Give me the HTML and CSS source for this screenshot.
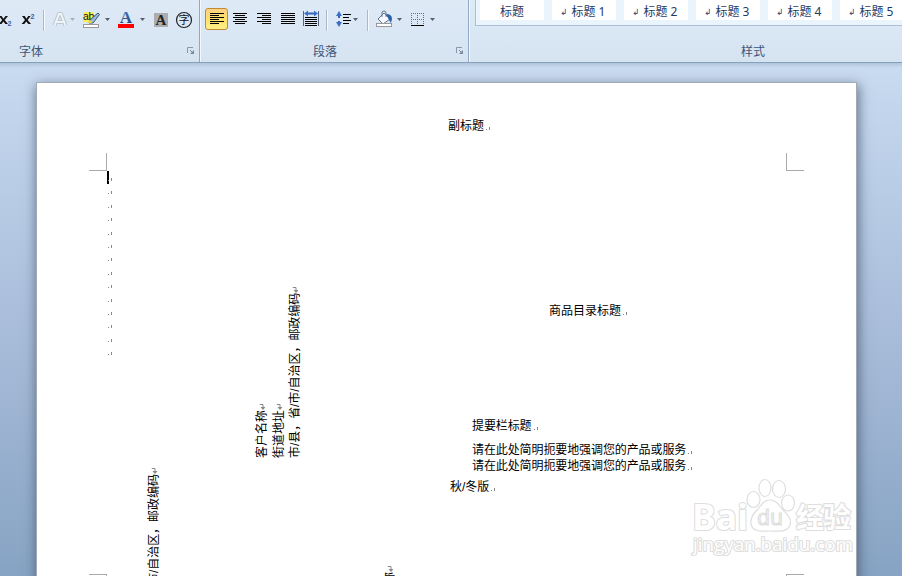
FILE: index.html
```
<!DOCTYPE html>
<html lang="zh-CN">
<head>
<meta charset="utf-8">
<title>文档</title>
<link rel="stylesheet" href="styles.css">
</head>
<body>
<svg width="0" height="0" class="defs">
  <defs>
    <linearGradient id="blue" x1="0" y1="0" x2="0" y2="1"><stop offset="0" stop-color="#4f86d0"/><stop offset="1" stop-color="#17356f"/></linearGradient>
    <symbol id="launch" viewBox="0 0 8 8"><path d="M0.5 6V0.5H6" fill="none" stroke="#8796aa"/><path d="M3 3l3 3" fill="none" stroke="#7c8899"/><path d="M3 7h4V3z" fill="#7c8899"/></symbol>
    <symbol id="ret" viewBox="0 0 6 6"><path d="M0 .5H3.500V4" fill="none" stroke="#888"/><path d="M1 3h5L3.500 6z" fill="#888"/></symbol>
  </defs>
</svg>
<div class="app">
  <header class="ribbon">
    <section class="group font-group">
      <div class="tools">
        <svg class="i-sub" width="12" height="22"><path d="M-1 6h2.500l2 2.700L5.500 6H8L4.700 10 8 14H5.300l-1.900-2.500L1.500 14H-1l3.200-4z" fill="#111"/><text x="7.500" y="15.500" class="script">2</text></svg>
        <svg class="i-sup" width="14" height="22"><path d="M0 6h2.700l1.700 2.700L6.300 6H8.700L5.600 10 9 14H6.300L4.200 11.500 2.300 14H-.4L3 10z" fill="#111"/><text x="8.500" y="8.500" class="script">2</text></svg>
        <i class="sep"></i>
        <svg class="i-glow" width="16" height="22"><path d="M2.500 15.500L7 4h2l4.500 11.500M4.500 12h7" class="halo"/><path d="M2.500 15.500L7 4h2l4.500 11.500M4.500 12h7" class="core"/></svg>
        <i class="drop pale"></i>
        <svg class="i-mark" width="18" height="22"><rect width="11" height="10" y="2" fill="#f5ee58"/><text x="0" y="9.500" class="ab">ab</text><path d="M15 3l1.500 1.500L10 13H6l2-4z" fill="#9cb9d8" stroke="#365579"/><path d="M4 13l3-3 3 2-2 1z" fill="#e5d64d"/><rect x=".5" y="14.500" width="15" height="3" fill="#fff" stroke="#999"/></svg>
        <i class="drop"></i>
        <svg class="i-color" width="16" height="22"><text x="8" y="13" class="serif-a">A</text><rect y="14" width="16" height="4" fill="#f00"/></svg>
        <i class="drop"></i>
        <svg class="i-shade" width="14" height="22"><rect y="3" width="14" height="14" fill="#adadad"/><text x="7" y="15" class="dark-a">A</text></svg>
        <svg class="i-ring" width="18" height="22"><circle cx="8" cy="10" r="7.500" fill="none" stroke="#222" stroke-width="1.200"/><text x="8" y="14" class="ring">字</text></svg>
      </div>
      <div class="caption">字体</div>
      <svg class="launcher" width="8" height="8"><use href="#launch"/></svg>
    </section>
    <section class="group para-group">
      <div class="tools">
        <span class="active"><svg width="14" height="12"><path d="M0 .5h14M0 2.500h9M0 4.500h14M0 6.500h9M0 8.500h14M0 10.500h9" stroke="#000"/></svg></span>
        <svg class="i-align" width="14" height="12"><path d="M0 .5h14M2 2.500h10M0 4.500h14M2 6.500h10M0 8.500h14M2 10.500h10" stroke="#000"/></svg>
        <svg class="i-align" width="14" height="12"><path d="M0 .5h14M5 2.500h9M0 4.500h14M5 6.500h9M0 8.500h14M5 10.500h9" stroke="#000"/></svg>
        <svg class="i-align" width="14" height="12"><path d="M0 .5h14M0 2.500h14M0 4.500h14M0 6.500h14M0 8.500h14M0 10.500h14" stroke="#000"/></svg>
        <svg class="i-dist" width="16" height="22"><path d="M.5 1v15M15.500 1v15" stroke="#53657c"/><path d="M3 3.500h10" stroke="#3165b8" stroke-width="2"/><path d="M1 3.500L5 .5v6zM15 3.500L11 .5v6z" fill="#3c71c6"/><path d="M2 7.500h12M2 9.500h12M2 11.500h12M2 13.500h12M2 15.500h12" stroke="#000"/></svg>
        <i class="sep"></i>
        <svg class="i-space" width="16" height="22"><path d="M3 4v4M3 11v4" stroke="#3263b0" stroke-width="2"/><path d="M0 6l3-5 3 5zM0 12l3 5 3-5z" fill="#3b6fc8"/><path d="M7 4.500h8M7 7.500h6M7 10.500h8M7 13.500h6" stroke="#000"/></svg>
        <i class="drop"></i>
        <i class="sep"></i>
        <svg class="i-fill" width="17" height="22"><path d="M2 9l6-6 6 6-7 5z" fill="#f5f9fd" stroke="#60768f"/><path d="M6 7V3q0-2 2-2t2 2v4" fill="none" stroke="#60768f"/><path d="M10 4q6 0 6 5l-1 4-2-3z" fill="#2e5fac"/><rect x=".5" y="13.500" width="15" height="3" fill="#fff" stroke="#999"/></svg>
        <i class="drop"></i>
        <svg class="i-grid" width="14" height="22"><path d="M.5 3v11M6.500 3v11M12.500 3v11M0 3.500h13M0 9.500h13" fill="none" stroke="#66717e" stroke-dasharray="1 1"/><path d="M0 15.500h13" stroke="#000"/></svg>
        <i class="drop"></i>
      </div>
      <div class="caption">段落</div>
      <svg class="launcher" width="8" height="8"><use href="#launch"/></svg>
    </section>
    <section class="group style-group">
      <div class="gallery">
        <div class="style">标题</div>
        <div class="style"><small>↲</small>标题 1</div>
        <div class="style"><small>↲</small>标题 2</div>
        <div class="style"><small>↲</small>标题 3</div>
        <div class="style"><small>↲</small>标题 4</div>
        <div class="style"><small>↲</small>标题 5</div>
      </div>
      <div class="caption">样式</div>
    </section>
  </header>
  <main class="workspace">
    <div class="page">
      <i class="crop tl"></i><i class="crop tr"></i><i class="crop bl"></i><i class="crop br"></i>
      <i class="caret"></i>
      <div class="empties"><i class="pm"></i><i class="pm"></i><i class="pm"></i><i class="pm"></i><i class="pm"></i><i class="pm"></i><i class="pm"></i><i class="pm"></i><i class="pm"></i><i class="pm"></i><i class="pm"></i><i class="pm"></i><i class="pm"></i><i class="pm"></i></div>
      <div class="box subtitle">副标题<i class="pm"></i></div>
      <div class="box catalog">商品目录标题<i class="pm"></i></div>
      <div class="box summary">
        <p class="head">提要栏标题<i class="pm"></i></p>
        <p>请在此处简明扼要地强调您的产品或服务<i class="pm"></i></p>
        <p>请在此处简明扼要地强调您的产品或服务<i class="pm"></i></p>
      </div>
      <div class="box season">秋/冬版<i class="pm"></i></div>
      <div class="box side address">
        <p>客户名称<svg class="ret" width="6" height="6"><use href="#ret"/></svg></p>
        <p>街道地址<svg class="ret" width="6" height="6"><use href="#ret"/></svg></p>
        <p>市/县，省/市/自治区，邮政编码<svg class="ret" width="6" height="6"><use href="#ret"/></svg></p>
      </div>
      <div class="box side sender"><p>市/自治区，邮政编码<svg class="ret" width="6" height="6"><use href="#ret"/></svg></p></div>
      <div class="box side company"><p>称<svg class="ret" width="6" height="6"><use href="#ret"/></svg></p></div>
      <svg class="logo" width="170" height="84" viewBox="688 474 170 84">
        <g class="wm">
          <g class="outer">
            <text x="692" y="530" font-size="36" font-weight="700" textLength="56" lengthAdjust="spacingAndGlyphs">Bai</text>
            <text x="796" y="528" font-size="28" font-weight="700" textLength="55" class="cn">经验</text>
            <text x="693" y="551" font-size="18" textLength="160" lengthAdjust="spacingAndGlyphs">jingyan.baidu.com</text>
          </g>
          <ellipse cx="753.500" cy="499.500" rx="6.500" ry="8"/><ellipse cx="765" cy="488" rx="6" ry="8.500"/><ellipse cx="779" cy="489" rx="6.500" ry="8.500"/><ellipse cx="788" cy="503" rx="6.500" ry="8"/>
          <path d="M770 500c-7 0-9 6-13 10s-7 8-6 14c2 9 12 7 19 7s17 2 20-6c2-7-3-11-7-15s-6-10-13-10z"/>
          <text x="757" y="525" font-size="21" textLength="26" lengthAdjust="spacingAndGlyphs">du</text>
        </g>
      </svg>
    </div>
  </main>
</div>
</body>
</html>
```
FILE: styles.css
```
* { box-sizing: border-box; }
body { margin: 0; overflow: hidden; font: 12px/16px "Liberation Sans", "Noto Sans CJK SC", sans-serif; }
.defs { position: absolute; }
p { margin: 0; }
.app { width: 902px; height: 576px; display: flex; flex-direction: column; overflow: hidden; }
.ribbon { display: flex; flex: none; height: 63px; background: linear-gradient(#deeaf6, #d6e3f1); border-bottom: 1px solid #88a1ba; overflow: hidden; }
.group { position: relative; flex: none; height: 62px; display: flex; flex-direction: column; justify-content: space-between; }
.font-group { width: 200px; border-right: 1px solid #91a8c5; box-shadow: 1px 0 #f2f8fe; }
.para-group { width: 269px; border-right: 1px solid #91a8c5; box-shadow: 1px 0 #f2f8fe; }
.style-group { width: 568px; }
.tools { display: flex; height: 32px; padding-top: 10px; align-items: flex-start; }
.tools svg { flex: none; display: block; overflow: visible; }
.caption { height: 16px; margin-bottom: 2px; text-align: center; color: #3e5577; }
.font-group .caption { width: 62px; }
.para-group .caption { width: 250px; }
.launcher { position: absolute; right: 4px; bottom: 7px; }
.sep { flex: none; width: 2px; height: 21px; background: linear-gradient(90deg, #aab8ca 50%, #f4f9ff 50%); }
.drop { flex: none; width: 5px; height: 3px; margin-top: 8px; background: #56606c; clip-path: polygon(0 0, 100% 0, 50% 100%); }
.pale { background: #a9b3bf; }
.i-sup { margin-left: 10px; }
.font-group .sep { margin-left: 7px; }
.i-glow { margin-left: 7px; }
.i-glow + .drop { margin-left: 2px; }
.i-mark { margin-left: 8px; }
.i-mark + .drop { margin-left: 4px; }
.i-color { margin-left: 8px; }
.i-color + .drop { margin-left: 6px; }
.i-shade { margin-left: 9px; }
.i-ring { margin-left: 8px; }
.script { font: bold 7px "Liberation Sans"; fill: #2f61ae; }
.halo { fill: none; stroke: #bcc7d2; stroke-width: 4px; stroke-linejoin: round; }
.core { fill: none; stroke: #eff4f8; stroke-width: 2px; }
.ab { font: 10.5px "Liberation Sans"; letter-spacing: -.3px; fill: #111; }
.serif-a { font: bold 17px "Liberation Serif"; text-anchor: middle; fill: url(#blue); }
.dark-a { font: bold 15px "Liberation Serif"; text-anchor: middle; fill: #222; }
.ring { font: 11px "Noto Sans CJK SC"; text-anchor: middle; fill: #111; }
.active { width: 23px; height: 22px; margin: -2px 0 0 5px; padding: 4px; border: 1px solid #c28a30; border-radius: 3px; background: linear-gradient(#fbd184, #ffdf67 50%, #fff18a); }
.i-align { margin: 3px 0 0 10px; }
.active + .i-align { margin-left: 5px; }
.i-dist { margin-left: 8px; }
.para-group .sep { margin-left: 7px; }
.i-space { margin-left: 8px; }
.i-space + .drop { margin-left: 1px; }
.para-group .drop + .sep { margin-left: 9px; }
.i-fill { margin-left: 7px; }
.i-fill + .drop { margin-left: 4px; }
.i-grid { margin-left: 9px; }
.i-grid + .drop { margin-left: 5px; }
.gallery { display: flex; gap: 8px; width: 562px; height: 26px; margin-left: 6px; padding-left: 4px; background: #eaf4fd; border: solid #a9bfda; border-width: 0 0 1px 1px; }
.style { flex: none; width: 64px; height: 20px; padding-top: 4px; background: #fff; text-align: center; color: #1f3a66; white-space: nowrap; font-family: "Noto Sans", "Noto Sans CJK SC", sans-serif; }
.style small { display: inline-block; width: 11px; margin-left: -2px; font: 8.5px/9px "DejaVu Sans"; text-align: left; vertical-align: 1px; }
.workspace { flex: 1; padding: 20px 0 0 36px; background: linear-gradient(#b0c5dd, #c9dbf0 5px, #c3d6ed 40px, #a3b8d6 310px, #87a3c3 513px); }
.page { position: relative; width: 821px; height: 520px; border: 1px solid #a1a9b4; border-bottom: 0; margin-top: -1px; background: #fff; box-shadow: 1px 4px 11px 1px rgba(60, 77, 99, .7); }
.box { position: absolute; white-space: nowrap; color: #000; font: 12px/16px "Liberation Sans", "Noto Sans CJK SC", sans-serif; }
.subtitle { left: 411px; top: 35px; }
.catalog { left: 512px; top: 220px; }
.summary { left: 435px; top: 335px; letter-spacing: -.1px; }
.summary .head { margin-bottom: 8px; }
.season { left: 413px; top: 396px; }
.pm { display: inline-block; width: 4px; height: 3px; margin-left: 2px; vertical-align: 0; background: linear-gradient(#888, #888) 0 2px / 1px 1px no-repeat, linear-gradient(#888, #888) 3px 0 / 1px 3px no-repeat; }
.empties { position: absolute; left: 71px; top: 95px; display: flex; flex-direction: column; gap: 10.4px; }
.empties .pm { margin: 0; }
.caret { position: absolute; left: 70px; top: 88px; width: 2px; height: 13px; background: #000; }
.crop { position: absolute; width: 18px; height: 18px; border: 0 solid #aaa; }
.tl { left: 52px; top: 70px; border-width: 0 1px 1px 0; }
.tr { left: 749px; top: 70px; border-width: 0 0 1px 1px; }
.bl { left: 52px; top: 491px; border-width: 1px 1px 0 0; }
.br { left: 749px; top: 491px; border-width: 1px 0 0 1px; }
.side { writing-mode: vertical-rl; text-orientation: sideways; transform: rotate(180deg); line-height: 16.5px; letter-spacing: -.05px; }
.address { left: 217px; top: 205px; height: 170px; }
.sender { left: 109px; top: 390px; height: 112px; }
.company { left: 345px; top: 483px; height: 18px; }
.side p { height: 100%; }
.ret { display: inline-block; transform: rotate(180deg); }
.logo { position: absolute; left: 651px; top: 391px; }
.wm { fill: #fff; stroke: #dedede; stroke-width: 1.2px; font-family: "Open Sans", "Noto Sans", sans-serif; }
.outer { stroke-width: 2.2px; stroke-linejoin: round; paint-order: stroke; }
.wm .cn { font-family: "Noto Sans CJK SC"; }
```
